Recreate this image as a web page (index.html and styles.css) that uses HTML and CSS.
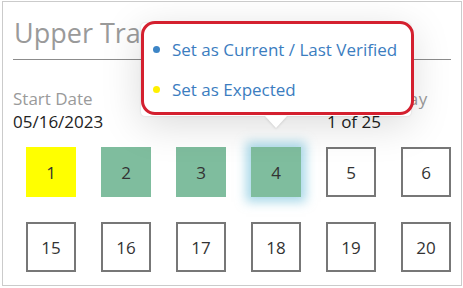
FILE: index.html
```html
<!DOCTYPE html>
<html>
<head>
<meta charset="utf-8">
<link rel="stylesheet" href="styles.css">
</head>
<body>
<div class="frame">
  <div class="title">Upper Track</div>
  <div class="info">
    <div class="field">
      <div class="label">Start Date</div>
      <div class="value">05/16/2023</div>
    </div>
    <div class="field">
      <div class="label wide">Current Day</div>
      <div class="value">1 of 25</div>
    </div>
  </div>
  <div class="days">
    <div class="day expected">1</div>
    <div class="day done">2</div>
    <div class="day done">3</div>
    <div class="day done active">4</div>
    <div class="day">5</div>
    <div class="day">6</div>
    <div class="day">15</div>
    <div class="day">16</div>
    <div class="day">17</div>
    <div class="day">18</div>
    <div class="day">19</div>
    <div class="day">20</div>
  </div>
  <div class="popover">
    <div class="item"><span class="dot blue"></span>Set as Current / Last Verified</div>
    <div class="item"><span class="dot yellow"></span>Set as Expected</div>
  </div>
  <div class="highlight"></div>
</div>
</body>
</html>
```

FILE: styles.css
```css
* { box-sizing: border-box; }
html, body { margin: 0; padding: 0; background: #fff; }
body {
  font-family: "Open Sans", "Noto Sans", sans-serif;
  padding: 1px 0 0 2px;
}
.frame {
  position: relative;
  width: 460px;
  height: 285px;
  border: 1px solid #cbcbcb;
  overflow: hidden;
  background: #fff;
}
.title {
  margin: 0 10px;
  padding: 13px 0 9px 1px;
  font-size: 27px;
  line-height: 35px;
  color: #9a9a9a;
  border-bottom: 1px solid #8c8c8c;
  white-space: nowrap;
}
.info {
  margin-top: 27px;
  padding-left: 10px;
  display: grid;
  grid-template-columns: 314px auto;
  font-size: 17px;
  line-height: 23px;
}
.label { color: #9a9a9a; }
.label.wide { letter-spacing: 0.45px; }
.value { color: #222; }
.days {
  margin-top: 14px;
  padding-left: 23px;
  display: grid;
  grid-template-columns: repeat(6, 50px);
  gap: 25px;
}
.day {
  width: 50px;
  height: 50px;
  border: 2px solid #777;
  background: #fff;
  display: flex;
  align-items: center;
  justify-content: center;
  font-size: 17px;
  color: #333;
}
.day.expected { background: #ffff00; border-color: #ffff00; }
.day.done { background: #7fbd9e; border-color: #7fbd9e; }
.day.active { box-shadow: 0 0 10px 5px rgba(100, 185, 215, 0.55); }
.popover {
  position: absolute;
  left: 138px;
  top: 21px;
  width: 270px;
  height: 93px;
  padding: 6px 0 0 12px;
  background: #fff;
  border-radius: 4px;
  box-shadow: 0 0 2px rgba(0,0,0,0.15), 0 8px 40px rgba(0,0,0,0.15);
}
.popover::after {
  content: "";
  position: absolute;
  left: 124px;
  bottom: -12px;
  border-left: 11px solid transparent;
  border-right: 11px solid transparent;
  border-top: 12px solid #fff;
  filter: drop-shadow(0 1px 1px rgba(0,0,0,0.12));
}
.item {
  display: flex;
  align-items: center;
  gap: 12px;
  height: 40px;
  font-size: 17px;
  color: #3b7dbf;
  white-space: nowrap;
}
.dot {
  width: 7px;
  height: 7px;
  border-radius: 50%;
  flex: none;
}
.dot.blue { background: #3d85c6; }
.dot.yellow { background: #fff000; }
.highlight {
  position: absolute;
  left: 138px;
  top: 19px;
  width: 273px;
  height: 94px;
  border: 3px solid #d4202f;
  border-radius: 14px;
  pointer-events: none;
}
```
